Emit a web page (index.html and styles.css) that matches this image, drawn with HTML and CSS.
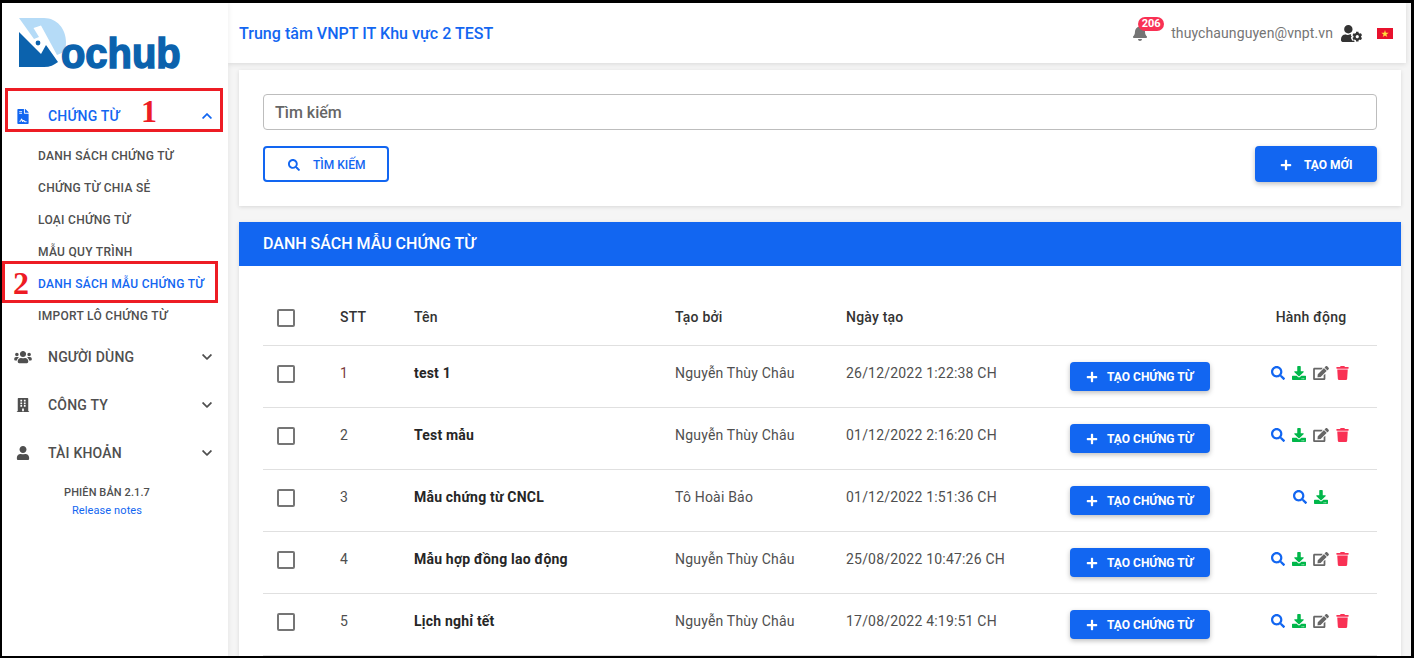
FILE: index.html
```html
<!DOCTYPE html>
<html lang="vi">
<head>
  <meta charset="UTF-8" />
  <title>Dochub</title>
  <link rel="stylesheet" href="styles.css">
</head>
<body>
  <svg class="icon-defs" xmlns="http://www.w3.org/2000/svg">
    <symbol id="i-search" viewBox="0 0 512 512"><path d="M505 442.7L405.3 343c-4.5-4.5-10.6-7-17-7H372c27.6-35.3 44-79.7 44-128C416 93.1 322.9 0 208 0S0 93.1 0 208s93.1 208 208 208c48.3 0 92.7-16.4 128-44v16.3c0 6.4 2.5 12.5 7 17l99.7 99.7c9.4 9.4 24.6 9.4 33.9 0l28.3-28.3c9.4-9.4 9.4-24.6.1-34zM208 336c-70.7 0-128-57.2-128-128 0-70.7 57.2-128 128-128 70.7 0 128 57.2 128 128 0 70.7-57.2 128-128 128z"/></symbol>
    <symbol id="i-plus" viewBox="0 0 448 512"><path d="M416 208H272V64c0-17.67-14.33-32-32-32h-32c-17.67 0-32 14.33-32 32v144H32c-17.67 0-32 14.33-32 32v32c0 17.67 14.33 32 32 32h144v144c0 17.67 14.33 32 32 32h32c17.67 0 32-14.33 32-32V304h144c17.67 0 32-14.33 32-32v-32c0-17.67-14.33-32-32-32z"/></symbol>
    <symbol id="i-download" viewBox="0 0 512 512"><path d="M216 0h80c13.3 0 24 10.7 24 24v168h87.7c17.8 0 26.7 21.5 14.1 34.1L269.7 378.3c-7.5 7.5-19.8 7.5-27.3 0L90.1 226.1c-12.6-12.6-3.7-34.1 14.1-34.1H192V24c0-13.3 10.7-24 24-24zm296 376v112c0 13.3-10.7 24-24 24H24c-13.3 0-24-10.7-24-24V376c0-13.3 10.7-24 24-24h146.7l49 49c20.1 20.1 52.5 20.1 72.6 0l49-49H488c13.3 0 24 10.7 24 24zm-124 88c0-11-9-20-20-20s-20 9-20 20 9 20 20 20 20-9 20-20zm64 0c0-11-9-20-20-20s-20 9-20 20 9 20 20 20 20-9 20-20z"/></symbol>
    <symbol id="i-edit" viewBox="0 0 576 512"><path d="M402.6 83.2l90.2 90.2c3.8 3.8 3.8 10 0 13.8L274.4 405.6l-92.8 10.3c-12.4 1.4-22.9-9.1-21.5-21.5l10.3-92.8L388.8 83.2c3.8-3.8 10-3.8 13.8 0zm162-22.9l-48.8-48.8c-15.2-15.2-39.9-15.2-55.2 0l-35.4 35.4c-3.8 3.8-3.8 10 0 13.8l90.2 90.2c3.8 3.8 10 3.8 13.8 0l35.4-35.4c15.2-15.3 15.2-40 0-55.2zM384 346.2V448H64V128h229.8c3.2 0 6.2-1.3 8.5-3.5l40-40c7.6-7.6 2.2-20.5-8.5-20.5H48C21.5 64 0 85.5 0 112v352c0 26.5 21.5 48 48 48h352c26.5 0 48-21.5 48-48V306.2c0-10.7-12.9-16-20.5-8.5l-40 40c-2.2 2.3-3.5 5.3-3.5 8.5z"/></symbol>
    <symbol id="i-trash" viewBox="0 0 448 512"><path d="M432 32H312l-9.4-18.7A24 24 0 0 0 281.1 0H166.8a23.72 23.72 0 0 0-21.4 13.3L136 32H16A16 16 0 0 0 0 48v32a16 16 0 0 0 16 16h416a16 16 0 0 0 16-16V48a16 16 0 0 0-16-16zM53.2 467a48 48 0 0 0 47.9 45h245.8a48 48 0 0 0 47.9-45L416 128H32z"/></symbol>
    <symbol id="i-down" viewBox="0 0 448 512"><path d="M207.029 381.476L12.686 187.132c-9.373-9.373-9.373-24.569 0-33.941l22.667-22.667c9.357-9.357 24.522-9.375 33.901-.04L224 284.505l154.745-154.021c9.379-9.335 24.544-9.317 33.901.04l22.667 22.667c9.373 9.373 9.373 24.569 0 33.941L240.971 381.476c-9.373 9.372-24.569 9.372-33.942 0z"/></symbol>
    <symbol id="i-up" viewBox="0 0 448 512"><path d="M240.971 130.524l194.343 194.343c9.373 9.373 9.373 24.569 0 33.941l-22.667 22.667c-9.357 9.357-24.522 9.375-33.901.04L224 227.495 69.255 381.516c-9.379 9.335-24.544 9.317-33.901-.04l-22.667-22.667c-9.373-9.373-9.373-24.569 0-33.941L207.03 130.525c9.372-9.373 24.568-9.373 33.941-.001z"/></symbol>
    <symbol id="i-user" viewBox="0 0 448 512"><path d="M224 256c70.7 0 128-57.3 128-128S294.7 0 224 0 96 57.3 96 128s57.3 128 128 128zm89.6 32h-16.7c-22.2 10.2-46.9 16-72.9 16s-50.6-5.8-72.9-16h-16.7C60.2 288 0 348.2 0 422.4V464c0 26.5 21.5 48 48 48h352c26.5 0 48-21.5 48-48v-41.6c0-74.2-60.2-134.4-134.4-134.4z"/></symbol>
    <symbol id="i-users" viewBox="0 0 640 512"><path d="M96 224c35.3 0 64-28.7 64-64s-28.7-64-64-64-64 28.7-64 64 28.7 64 64 64zm448 0c35.3 0 64-28.7 64-64s-28.7-64-64-64-64 28.7-64 64 28.7 64 64 64zm32 32h-64c-17.6 0-33.5 7.1-45.1 18.6 40.3 22.1 68.9 62 75.1 109.4h66c17.7 0 32-14.3 32-32v-32c0-35.3-28.7-64-64-64zm-256 0c61.9 0 112-50.1 112-112S381.9 32 320 32 208 82.1 208 144s50.1 112 112 112zm76.8 32h-8.3c-20.8 10-43.9 16-68.5 16s-47.6-6-68.5-16h-8.3C179.6 288 128 339.6 128 403.2V432c0 26.5 21.5 48 48 48h288c26.5 0 48-21.5 48-48v-28.8c0-63.6-51.6-115.2-115.2-115.2zm-223.7-13.4C161.5 263.1 145.6 256 128 256H64c-35.3 0-64 28.7-64 64v32c0 17.7 14.3 32 32 32h65.9c6.3-47.4 34.9-87.3 75.2-109.4z"/></symbol>
    <symbol id="i-building" viewBox="0 0 448 512"><path d="M436 480h-20V24c0-13.255-10.745-24-24-24H56C42.745 0 32 10.745 32 24v456H12c-6.627 0-12 5.373-12 12v20h448v-20c0-6.627-5.373-12-12-12zM128 76c0-6.627 5.373-12 12-12h40c6.627 0 12 5.373 12 12v40c0 6.627-5.373 12-12 12h-40c-6.627 0-12-5.373-12-12V76zm0 96c0-6.627 5.373-12 12-12h40c6.627 0 12 5.373 12 12v40c0 6.627-5.373 12-12 12h-40c-6.627 0-12-5.373-12-12v-40zm52 148h-40c-6.627 0-12-5.373-12-12v-40c0-6.627 5.373-12 12-12h40c6.627 0 12 5.373 12 12v40c0 6.627-5.373 12-12 12zm76 160h-64v-84c0-6.627 5.373-12 12-12h40c6.627 0 12 5.373 12 12v84zm64-172c0 6.627-5.373 12-12 12h-40c-6.627 0-12-5.373-12-12v-40c0-6.627 5.373-12 12-12h40c6.627 0 12 5.373 12 12v40zm0-96c0 6.627-5.373 12-12 12h-40c-6.627 0-12-5.373-12-12v-40c0-6.627 5.373-12 12-12h40c6.627 0 12 5.373 12 12v40zm0-96c0 6.627-5.373 12-12 12h-40c-6.627 0-12-5.373-12-12V76c0-6.627 5.373-12 12-12h40c6.627 0 12 5.373 12 12v40z"/></symbol>
    <symbol id="i-bell" viewBox="0 0 448 512"><path d="M224 512c35.32 0 63.97-28.65 63.97-64H160.03c0 35.35 28.65 64 63.97 64zm215.39-149.71c-19.32-20.76-55.47-51.99-55.47-154.29 0-77.7-54.48-139.9-127.94-155.16V32c0-17.67-14.32-32-31.98-32s-31.98 14.33-31.98 32v20.84C118.56 68.1 64.08 130.3 64.08 208c0 102.3-36.15 133.53-55.47 154.29-6 6.45-8.66 14.16-8.61 21.71.11 16.4 12.98 32 32.1 32h383.8c19.12 0 32-15.6 32.1-32 .05-7.55-2.61-15.27-8.61-21.71z"/></symbol>
    <symbol id="i-file" viewBox="0 0 384 512"><path d="M224 136V0H24C10.7 0 0 10.7 0 24v464c0 13.3 10.7 24 24 24h336c13.3 0 24-10.7 24-24V160H248c-13.2 0-24-10.8-24-24zM64 72c0-4.4 3.6-8 8-8h80c4.4 0 8 3.6 8 8v16c0 4.4-3.6 8-8 8H72c-4.400 0-8-3.600-8-8V72zm0 64c0-4.400 3.600-8 8-8h80c4.400 0 8 3.600 8 8v16c0 4.400-3.600 8-8 8H72c-4.400 0-8-3.600-8-8v-16zm192.800 280H304c8.800 0 16 7.200 16 16s-7.200 16-16 16h-47.200c-16.500 0-31.200-9.100-38.600-23.900-3-5.900-8.100-6.500-10.200-6.500s-7.200.500-10 6.200l-7.700 15.300c-2.700 5.400-8.200 8.800-14.300 8.800-.4 0-.8 0-1.100 0-6.500-.5-12-4.800-14.100-11L144 372l-10.600 31.800c-5.900 17.700-22.400 29.600-41 29.600H80c-8.800 0-16-7.200-16-16s7.200-16 16-16h12.400c4.800 0 9.100-3.100 10.600-7.700l18.200-54.600c3.300-9.800 12.400-16.400 22.800-16.400s19.500 6.600 22.800 16.400l13.900 41.700c19.700-16.100 54.100-9.700 66.100 14.300 2 3.900 5.800 6.300 10 6.300zM377 105L279.100 7c-4.500-4.500-10.600-7-17-7H256v128h128v-6.100c0-6.300-2.500-12.400-7-16.900z"/></symbol>
    <symbol id="i-user-cog" viewBox="0 0 640 512"><path d="M610.500 373.300c2.600-14.100 2.600-28.500 0-42.600l25.800-14.900c3-1.700 4.300-5.200 3.300-8.500-6.700-21.600-18.200-41.200-33.200-57.400-2.300-2.500-6-3.100-9-1.400l-25.800 14.900c-10.900-9.300-23.400-16.500-36.900-21.300v-29.800c0-3.400-2.400-6.400-5.700-7.100-22.300-5-45-4.800-66.200 0-3.300.7-5.700 3.700-5.700 7.100v29.800c-13.500 4.800-26 12-36.900 21.300l-25.800-14.900c-2.900-1.700-6.700-1.100-9 1.400-15 16.200-26.500 35.800-33.200 57.400-1 3.300.4 6.800 3.300 8.500l25.800 14.900c-2.600 14.100-2.600 28.500 0 42.600l-25.800 14.900c-3 1.700-4.300 5.200-3.300 8.500 6.700 21.600 18.200 41.100 33.200 57.400 2.300 2.500 6 3.100 9 1.400l25.800-14.900c10.900 9.300 23.400 16.500 36.900 21.300v29.800c0 3.400 2.400 6.400 5.700 7.100 22.300 5 45 4.800 66.200 0 3.300-.7 5.700-3.700 5.700-7.100v-29.800c13.500-4.800 26-12 36.900-21.300l25.800 14.900c2.900 1.700 6.700 1.100 9-1.400 15-16.200 26.500-35.800 33.200-57.400 1-3.300-.4-6.800-3.300-8.500l-25.800-14.900zM496 400.500c-26.800 0-48.500-21.800-48.500-48.500s21.800-48.500 48.500-48.500 48.500 21.800 48.500 48.500-21.700 48.500-48.500 48.500zM224 256c70.700 0 128-57.300 128-128S294.700 0 224 0 96 57.300 96 128s57.300 128 128 128zM134.400 288C60.200 288 0 348.200 0 422.400V464c0 26.500 21.500 48 48 48h352c8 0 15-2 21-5-9-4-15-12-15-22v-9c-7-2-13-5-19-9l-8 5c-12 6-26 4-35-6-18-20-32-44-40-70-4-13 2-27 14-34l8-5c-.5-5-.5-11 0-16l-8-5c-12-7-18-21-14-34 2-6 4-12 7-18-5-1-11-2-17-2h-16.700c-22.200 10.200-46.900 16-72.900 16s-50.600-5.800-72.900-16z"/></symbol>
  </svg>

  <div class="frame">
    <aside class="sidebar">
      <div class="logo">
        <svg class="logo-mark" viewBox="0 0 60 62" xmlns="http://www.w3.org/2000/svg">
          <path fill="#b5dbf7" d="M5 6H30C43 6 52 17 52 30C52 34 51.500 37 50 40L43 43L27 13.500L19.500 16L25 25L20 27Z"/>
          <path fill="#0b62ad" d="M5 20L27 42L32 33L44 50C40 53 36 55 30 55H5Z"/>
          <circle fill="#0b62ad" cx="24" cy="31" r="2.400"/>
        </svg>
        <span class="logo-text">ochub</span>
      </div>

      <nav>
        <a class="nav-item active">
          <svg class="nav-icon nav-icon-file"><use href="#i-file"/></svg>
          <span class="nav-label">CHỨNG TỪ</span>
          <svg class="nav-caret"><use href="#i-up"/></svg>
        </a>
        <ul class="sub-nav">
          <li>DANH SÁCH CHỨNG TỪ</li>
          <li>CHỨNG TỪ CHIA SẺ</li>
          <li>LOẠI CHỨNG TỪ</li>
          <li>MẪU QUY TRÌNH</li>
          <li class="current">DANH SÁCH MẪU CHỨNG TỪ</li>
          <li>IMPORT LÔ CHỨNG TỪ</li>
        </ul>
        <a class="nav-item">
          <svg class="nav-icon"><use href="#i-users"/></svg>
          <span class="nav-label">NGƯỜI DÙNG</span>
          <svg class="nav-caret"><use href="#i-down"/></svg>
        </a>
        <a class="nav-item">
          <svg class="nav-icon"><use href="#i-building"/></svg>
          <span class="nav-label">CÔNG TY</span>
          <svg class="nav-caret"><use href="#i-down"/></svg>
        </a>
        <a class="nav-item">
          <svg class="nav-icon"><use href="#i-user"/></svg>
          <span class="nav-label">TÀI KHOẢN</span>
          <svg class="nav-caret"><use href="#i-down"/></svg>
        </a>
      </nav>

      <div class="version">
        <div>PHIÊN BẢN 2.1.7</div>
        <a class="release-link">Release notes</a>
      </div>
    </aside>

    <div class="main">
      <header class="topbar">
        <div class="org-name">Trung tâm VNPT IT Khu vực 2 TEST</div>
        <div class="topbar-right">
          <div class="bell">
            <svg class="bell-icon"><use href="#i-bell"/></svg>
            <span class="badge">206</span>
          </div>
          <span class="email">thuychaunguyen@vnpt.vn</span>
          <svg class="user-cog"><use href="#i-user-cog"/></svg>
          <svg class="flag" viewBox="0 0 16 11" xmlns="http://www.w3.org/2000/svg">
            <rect width="16" height="11" fill="#e8112d"/>
            <polygon fill="#ffdf3a" points="8,2 8.900,4.700 11.700,4.700 9.400,6.400 10.300,9 8,7.400 5.700,9 6.600,6.400 4.300,4.700 7.100,4.700"/>
          </svg>
        </div>
      </header>

      <section class="search-card">
        <div class="search-input">Tìm kiếm</div>
        <div class="search-actions">
          <button class="btn btn-outline">
            <svg class="btn-icon"><use href="#i-search"/></svg>
            TÌM KIẾM
          </button>
          <button class="btn btn-primary btn-new">
            <svg class="btn-icon"><use href="#i-plus"/></svg>
            TẠO MỚI
          </button>
        </div>
      </section>

      <section class="list-card">
        <h2 class="list-title">DANH SÁCH MẪU CHỨNG TỪ</h2>
        <div class="list-table">
          <div class="row row-head">
            <div><span class="checkbox"></span></div>
            <div>STT</div>
            <div>Tên</div>
            <div>Tạo bởi</div>
            <div>Ngày tạo</div>
            <div></div>
            <div class="col-actions">Hành động</div>
          </div>

          <div class="row">
            <div><span class="checkbox"></span></div>
            <div class="stt">1</div>
            <div class="name">test 1</div>
            <div>Nguyễn Thùy Châu</div>
            <div>26/12/2022 1:22:38 CH</div>
            <div><button class="btn btn-primary btn-row"><svg class="btn-icon"><use href="#i-plus"/></svg>TẠO CHỨNG TỪ</button></div>
            <div class="col-actions actions">
              <svg class="act act-search"><use href="#i-search"/></svg>
              <svg class="act act-download"><use href="#i-download"/></svg>
              <svg class="act act-edit"><use href="#i-edit"/></svg>
              <svg class="act act-trash"><use href="#i-trash"/></svg>
            </div>
          </div>

          <div class="row">
            <div><span class="checkbox"></span></div>
            <div>2</div>
            <div class="name">Test mẫu</div>
            <div>Nguyễn Thùy Châu</div>
            <div>01/12/2022 2:16:20 CH</div>
            <div><button class="btn btn-primary btn-row"><svg class="btn-icon"><use href="#i-plus"/></svg>TẠO CHỨNG TỪ</button></div>
            <div class="col-actions actions">
              <svg class="act act-search"><use href="#i-search"/></svg>
              <svg class="act act-download"><use href="#i-download"/></svg>
              <svg class="act act-edit"><use href="#i-edit"/></svg>
              <svg class="act act-trash"><use href="#i-trash"/></svg>
            </div>
          </div>

          <div class="row">
            <div><span class="checkbox"></span></div>
            <div>3</div>
            <div class="name">Mẫu chứng từ CNCL</div>
            <div>Tô Hoài Bảo</div>
            <div>01/12/2022 1:51:36 CH</div>
            <div><button class="btn btn-primary btn-row"><svg class="btn-icon"><use href="#i-plus"/></svg>TẠO CHỨNG TỪ</button></div>
            <div class="col-actions actions">
              <svg class="act act-search"><use href="#i-search"/></svg>
              <svg class="act act-download"><use href="#i-download"/></svg>
            </div>
          </div>

          <div class="row">
            <div><span class="checkbox"></span></div>
            <div>4</div>
            <div class="name">Mẫu hợp đồng lao động</div>
            <div>Nguyễn Thùy Châu</div>
            <div>25/08/2022 10:47:26 CH</div>
            <div><button class="btn btn-primary btn-row"><svg class="btn-icon"><use href="#i-plus"/></svg>TẠO CHỨNG TỪ</button></div>
            <div class="col-actions actions">
              <svg class="act act-search"><use href="#i-search"/></svg>
              <svg class="act act-download"><use href="#i-download"/></svg>
              <svg class="act act-edit"><use href="#i-edit"/></svg>
              <svg class="act act-trash"><use href="#i-trash"/></svg>
            </div>
          </div>

          <div class="row">
            <div><span class="checkbox"></span></div>
            <div>5</div>
            <div class="name">Lịch nghỉ tết</div>
            <div>Nguyễn Thùy Châu</div>
            <div>17/08/2022 4:19:51 CH</div>
            <div><button class="btn btn-primary btn-row"><svg class="btn-icon"><use href="#i-plus"/></svg>TẠO CHỨNG TỪ</button></div>
            <div class="col-actions actions">
              <svg class="act act-search"><use href="#i-search"/></svg>
              <svg class="act act-download"><use href="#i-download"/></svg>
              <svg class="act act-edit"><use href="#i-edit"/></svg>
              <svg class="act act-trash"><use href="#i-trash"/></svg>
            </div>
          </div>
        </div>
      </section>
    </div>

    <!-- red annotations drawn over the screenshot -->
    <div class="mark mark-one"></div>
    <div class="mark mark-two"></div>
    <span class="mark-num num-one">1</span>
    <span class="mark-num num-two">2</span>
  </div>
</body>
</html>
```

FILE: styles.css
```css
html, body {
  margin: 0;
  padding: 0;
  height: 100%;
  overflow: hidden;
  background-color: #000;
}

body {
  font-family: Roboto, 'Noto Sans', sans-serif;
  color: #4f4f4f;
}

.icon-defs {
  display: none;
}

.frame {
  position: relative;
  display: flex;
  box-sizing: border-box;
  width: 1414px;
  height: 658px;
  border: 2px solid #000;
  border-top-width: 3px;
  border-right-width: 3px;
  background-color: #f5f5f5;
  overflow: hidden;
}

/* sidebar */
.sidebar {
  flex: 0 0 226px;
  background-color: #fff;
  box-shadow: 0 0 6px rgba(0, 0, 0, 0.08);
  z-index: 2;
}

.logo {
  display: flex;
  align-items: flex-start;
  box-sizing: border-box;
  height: 89px;
  padding: 9px 0 0 12px;
}

.logo-mark {
  width: 60px;
  height: 62px;
  flex: none;
}

.logo-text {
  margin: 25px 0 0 -13px;
  font-family: 'Liberation Sans', Arial, sans-serif;
  font-size: 42px;
  line-height: 34px;
  font-weight: bold;
  color: #0b62ad;
  -webkit-text-stroke: 1.5px #0b62ad;
  transform: scaleX(0.95);
  transform-origin: left bottom;
}

.nav-item {
  display: flex;
  align-items: center;
  height: 48px;
  padding: 0 16px 0 11px;
  font-size: 14px;
  font-weight: 500;
  letter-spacing: 0.2px;
  color: #4f4f4f;
}

.nav-item.active {
  color: #1266f1;
}

.nav-icon {
  width: 20px;
  height: 14px;
  margin-right: 15px;
  fill: currentColor;
}

.nav-icon-file {
  height: 15px;
}

.nav-label {
  flex: 1;
}

.nav-caret {
  width: 10px;
  height: 14px;
  fill: currentColor;
}

.sub-nav {
  list-style: none;
  margin: 0 0 1px;
  padding: 0 0 0 36px;
  font-size: 12px;
  font-weight: 500;
  letter-spacing: 0.3px;
}

.sub-nav li {
  height: 32px;
  line-height: 32px;
  white-space: nowrap;
}

.sub-nav li.current {
  color: #1266f1;
}

.version {
  margin-top: 7px;
  text-align: center;
  font-size: 11px;
  font-weight: 500;
  letter-spacing: 0.1px;
  line-height: 18px;
  padding-right: 16px;
}

.release-link {
  font-weight: 400;
  color: #1266f1;
}

/* main column */
.main {
  flex: 1;
  min-width: 0;
  display: flex;
  flex-direction: column;
  align-items: flex-start;
  padding-right: 8px;
}

.topbar {
  box-sizing: border-box;
  display: flex;
  align-items: center;
  justify-content: space-between;
  width: calc(100% + 3px);
  height: 60px;
  padding: 0 13px 0 11px;
  background-color: #fff;
  box-shadow: 0 1px 5px rgba(0, 0, 0, 0.12);
}

.org-name {
  font-size: 16px;
  font-weight: 500;
  letter-spacing: 0.03px;
  color: #1266f1;
}

.topbar-right {
  display: flex;
  align-items: center;
}

.bell {
  position: relative;
  width: 16px;
  height: 16px;
  margin-right: 23px;
}

.bell-icon {
  width: 16px;
  height: 16px;
  fill: #757575;
}

.badge {
  position: absolute;
  top: -8px;
  left: 6px;
  padding: 0 3.5px;
  height: 14px;
  line-height: 14px;
  border-radius: 8px;
  background-color: #f93154;
  color: #fff;
  font-size: 11px;
  font-weight: 700;
}

.email {
  font-size: 14px;
  letter-spacing: 0.1px;
  color: #757575;
  margin-right: 8px;
}

.user-cog {
  width: 21px;
  height: 17px;
  fill: #333;
  margin-right: 15px;
}

.flag {
  width: 16px;
  height: 11px;
}

/* search card */
.search-card {
  box-sizing: border-box;
  width: 100%;
  margin: 7px 0 0 11px;
  margin-right: 0;
  padding: 24px;
  height: 136px;
  background-color: #fff;
  box-shadow: 0 1px 4px rgba(0, 0, 0, 0.12);
  max-width: 1162px;
}

.search-input {
  box-sizing: border-box;
  height: 36px;
  line-height: 36px;
  padding-left: 11px;
  border: 1px solid #bdbdbd;
  border-radius: 4px;
  font-size: 16px;
  font-weight: 500;
  color: #666;
}

.search-actions {
  display: flex;
  justify-content: space-between;
  margin-top: 16px;
}

.btn {
  display: inline-flex;
  align-items: center;
  box-sizing: border-box;
  border: none;
  border-radius: 4px;
  font-family: inherit;
  font-size: 12px;
  font-weight: 500;
  height: 36px;
  padding: 1px 0 0;
}

.btn-icon {
  width: 12px;
  height: 12px;
  fill: currentColor;
}

.btn-outline {
  width: 126px;
  padding-left: 23px;
  border: 2px solid #1266f1;
  background-color: #fff;
  color: #1266f1;
}

.btn-outline .btn-icon {
  margin-right: 13px;
}

.btn-primary {
  background-color: #1266f1;
  color: #fff;
  box-shadow: 0 2px 5px rgba(0, 0, 0, 0.25);
}

.btn-new {
  width: 122px;
  padding-left: 25px;
  font-weight: 700;
}

.btn-new .btn-icon {
  margin-right: 12px;
}

/* list */
.list-card {
  box-sizing: border-box;
  width: 1162px;
  flex: 1;
  margin: 16px 0 0 11px;
  background-color: #fff;
  box-shadow: 0 1px 4px rgba(0, 0, 0, 0.12);
}

.list-title {
  margin: 0;
  height: 44px;
  line-height: 44px;
  padding-left: 24px;
  background-color: #1266f1;
  color: #fff;
  font-size: 16px;
  font-weight: 500;
}

.list-table {
  margin: 0 24px;
  padding-top: 24px;
  font-size: 14px;
  letter-spacing: 0.2px;
  color: #4f4f4f;
}

.row {
  display: grid;
  grid-template-columns: 77px 74px 261px 171px 224px 175px 132px;
  align-items: center;
  height: 62px;
  border-bottom: 1px solid #e0e0e0;
  box-sizing: border-box;
}

.row > div {
  padding-bottom: 7px;
}

.row > div:first-child {
  padding: 0 0 5px 14px;
  display: flex;
}

.row > div:nth-child(6) {
  padding-bottom: 0;
}

.row-head {
  height: 56px;
  font-weight: 500;
  color: #333;
}

.row-head > div {
  padding-bottom: 1px;
}

.row-head > div:first-child {
  padding-bottom: 0;
}

.checkbox {
  box-sizing: border-box;
  width: 18px;
  height: 18px;
  border: 2px solid #757575;
  border-radius: 2px;
}

.stt {
  color: #7a3b3b;
}

.name {
  font-weight: 700;
  color: #262626;
}

.btn-row {
  width: 140px;
  height: 29px;
  padding-left: 16px;
  font-weight: 700;
  letter-spacing: 0;
}

.btn-row .btn-icon {
  margin-right: 9px;
}

.col-actions {
  text-align: center;
}

.actions {
  display: flex;
  justify-content: center;
  gap: 7px;
  padding-right: 2px;
}

.act {
  width: 14px;
  height: 14px;
}

.act-search { fill: #1266f1; }
.act-download { fill: #00b74a; }
.act-edit { fill: #666; width: 16px; }
.act-trash { fill: #f93154; width: 13px; }

/* red annotations */
.mark {
  position: absolute;
  box-sizing: border-box;
  border: 3px solid #ed1c24;
  z-index: 5;
}

.mark-one {
  left: 3px;
  top: 85px;
  width: 218px;
  height: 44px;
}

.mark-two {
  left: 0;
  top: 258px;
  width: 216px;
  height: 42px;
}

.mark-num {
  position: absolute;
  z-index: 6;
  font-family: 'Liberation Serif', serif;
  font-weight: bold;
  font-size: 32px;
  line-height: 32px;
  color: #ed1c24;
}

.num-one { left: 139px; top: 92px; }
.num-two { left: 11px; top: 264px; }
```
